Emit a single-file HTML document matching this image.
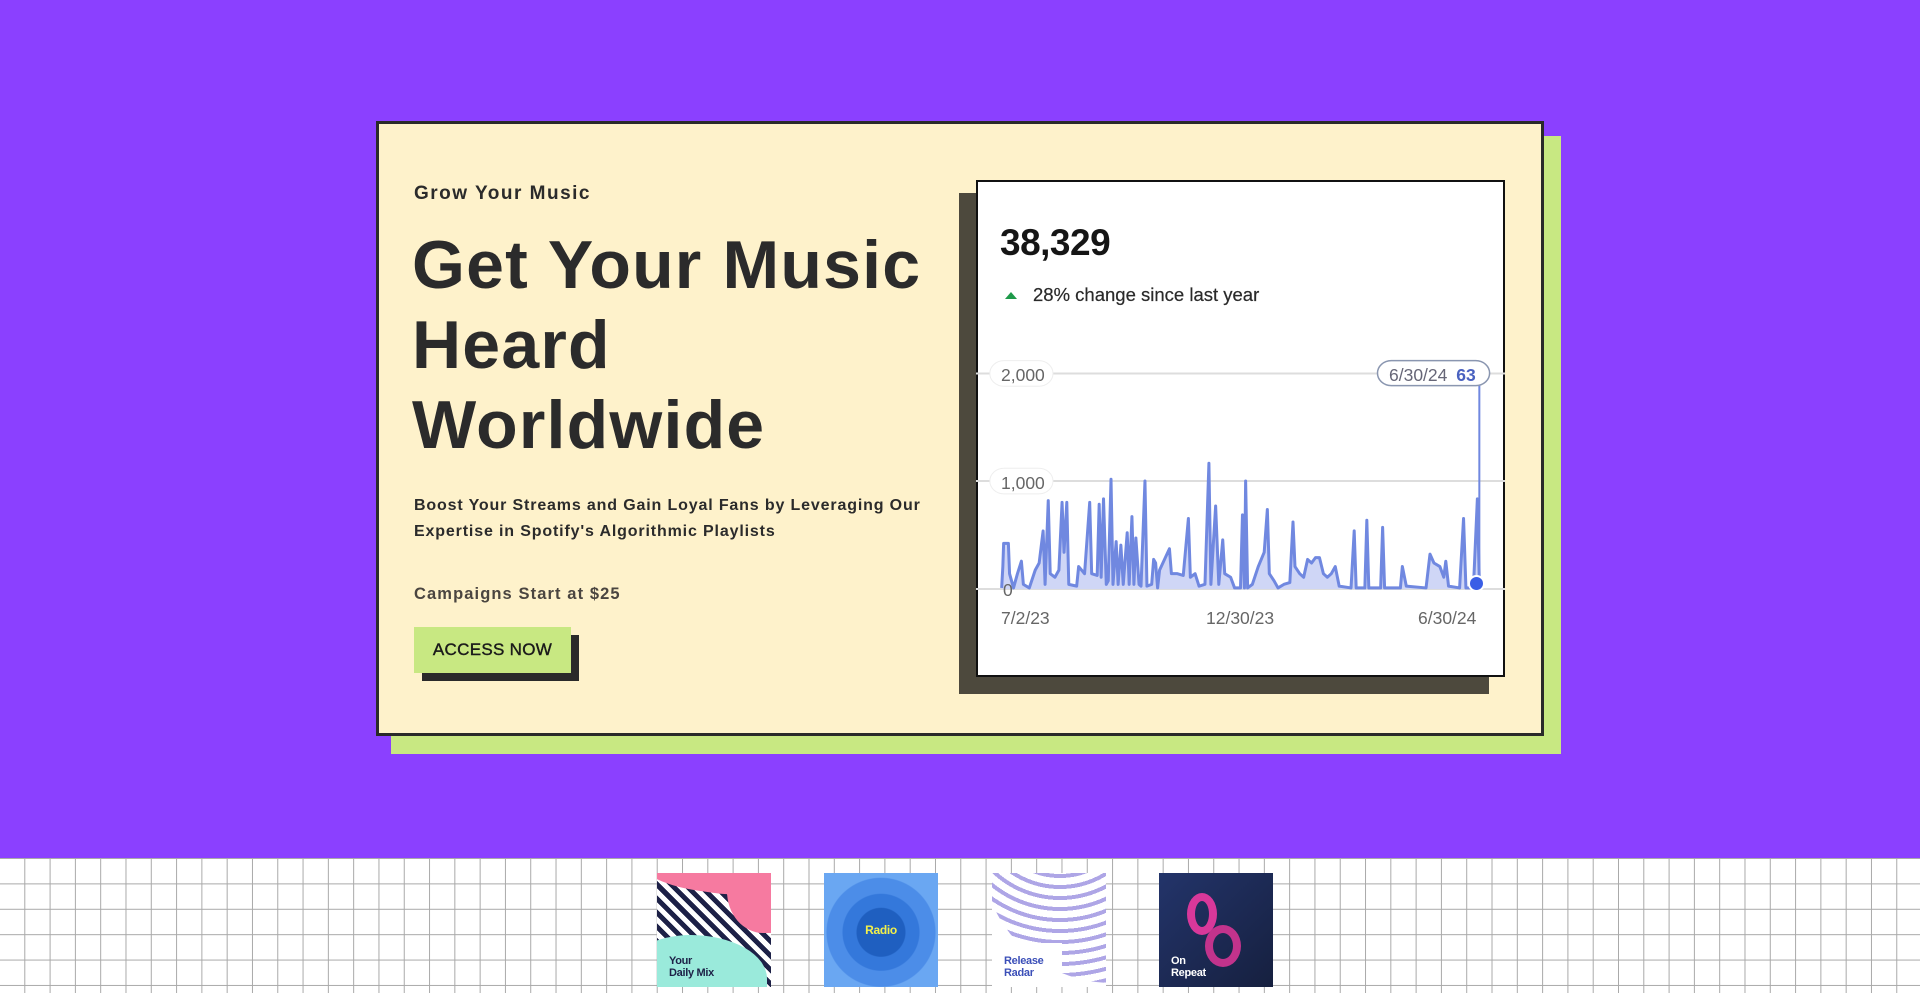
<!DOCTYPE html>
<html><head><meta charset="utf-8"><style>
*{margin:0;padding:0;box-sizing:border-box}
body{width:1920px;height:993px;overflow:hidden;font-family:"Liberation Sans",sans-serif;background:#fff;position:relative}
.purple{position:absolute;left:0;top:0;width:1920px;height:858px;background:#8b40ff}
.grid{position:absolute;left:0;top:858px;width:1920px;height:135px;background-color:#fff;
background-image:linear-gradient(to right,#a9a9a9 1px,transparent 1px),linear-gradient(to bottom,#a9a9a9 1px,transparent 1px);
background-size:25.3px 25.4px;background-position:-1px 0px}
.green{position:absolute;left:391px;top:136px;width:1170px;height:618px;background:#c8e882}
.card{position:absolute;left:376px;top:121px;width:1168px;height:615px;background:#fef2cb;border:3px solid #2a2a2a}
.abs{position:absolute;white-space:nowrap;color:#2b2b2b;font-weight:bold}
.shadow{position:absolute;left:959px;top:193px;width:530px;height:501px;background:#4d493d}
.chart{position:absolute;left:976px;top:180px;width:529px;height:497px;background:#fff;border:2px solid #111}
.thumb{position:absolute;top:873px;width:114px;height:114px;overflow:hidden}
.tt{position:absolute;font-weight:bold;font-size:11px;line-height:12px;letter-spacing:-0.3px}
</style></head><body>
<div class="purple"></div>
<div class="grid"></div>
<div class="green"></div>
<div class="card"></div>

<div class="abs" style="left:414px;top:183px;font-size:19px;letter-spacing:1.5px">Grow Your Music</div>
<div class="abs" style="left:412px;top:225px;font-size:68px;line-height:80px;letter-spacing:1.2px">Get Your Music<br>Heard<br>Worldwide</div>
<div class="abs" style="left:414px;top:493px;font-size:16px;line-height:26px;letter-spacing:0.85px">Boost Your Streams and Gain Loyal Fans by Leveraging Our<br>Expertise in Spotify's Algorithmic Playlists</div>
<div class="abs" style="left:414px;top:585px;font-size:16.5px;color:#4a4540;letter-spacing:1.1px">Campaigns Start at $25</div>
<div style="position:absolute;left:422px;top:635px;width:157px;height:46px;background:#2a2a2a"></div>
<div style="position:absolute;left:414px;top:627px;width:157px;height:46px;background:#c8e882"></div>
<div class="abs" style="left:414px;top:627px;width:157px;height:46px;line-height:46px;text-align:center;font-size:17px;font-weight:normal;color:#1a1a1a;-webkit-text-stroke:0.4px #1a1a1a;letter-spacing:0.3px">ACCESS NOW</div>

<div class="shadow"></div>
<div class="chart">
<svg style="position:absolute;left:-2px;top:-2px" width="529" height="497" viewBox="65 55 1340 1395" preserveAspectRatio="none">
<line x1="65" y1="598" x2="1405" y2="598" stroke="#ddd" stroke-width="2" vector-effect="non-scaling-stroke"/>
<line x1="65" y1="900" x2="1405" y2="900" stroke="#ddd" stroke-width="2" vector-effect="non-scaling-stroke"/>
<line x1="65" y1="1203" x2="1405" y2="1203" stroke="#ddd" stroke-width="2" vector-effect="non-scaling-stroke"/>
<rect x="100" y="562" width="160" height="72" rx="36" fill="#fff" stroke="#eee" vector-effect="non-scaling-stroke"/>
<rect x="100" y="864" width="160" height="72" rx="36" fill="#fff" stroke="#eee" vector-effect="non-scaling-stroke"/>
<path d="M130,1200 L133,1140 135,1075 147,1075 150,1160 160,1200 170,1160 180,1125 185,1190 200,1200 215,1150 225,1130 235,1040 240,1190 248,955 253,1160 265,1170 275,1150 283,960 288,1100 295,960 300,1190 320,1195 325,1140 340,1160 353,960 358,1160 372,1165 377,965 382,1170 388,950 395,1190 400,1180 407,895 412,1190 420,1070 425,1190 432,1080 438,1190 448,1045 453,1190 460,1000 465,1190 470,1060 478,1190 483,1195 493,900 498,1195 510,1190 515,1120 520,1130 525,1200 530,1150 555,1090 560,1160 575,1160 590,1165 603,1005 608,1170 620,1160 630,1195 645,1190 655,850 660,1190 672,970 680,1190 690,1065 695,1160 710,1170 720,1200 735,1200 740,995 745,1200 748,900 753,1200 765,1190 780,1140 795,1100 803,980 808,1160 820,1180 830,1200 845,1190 860,1185 868,1015 873,1140 885,1160 895,1170 905,1120 915,1130 925,1115 935,1115 945,1160 955,1170 965,1160 975,1140 985,1195 1015,1200 1023,1040 1028,1200 1050,1200 1055,1010 1060,1200 1090,1200 1095,1030 1100,1200 1140,1200 1145,1140 1155,1195 1205,1200 1215,1105 1225,1130 1240,1140 1250,1170 1255,1125 1262,1195 1290,1200 1300,1005 1306,1200 1325,1200 1335,950 1340,1185 L1340,1203 L130,1203 Z" fill="#cfd6f6" stroke="none"/>
<path d="M130,1200 L133,1140 135,1075 147,1075 150,1160 160,1200 170,1160 180,1125 185,1190 200,1200 215,1150 225,1130 235,1040 240,1190 248,955 253,1160 265,1170 275,1150 283,960 288,1100 295,960 300,1190 320,1195 325,1140 340,1160 353,960 358,1160 372,1165 377,965 382,1170 388,950 395,1190 400,1180 407,895 412,1190 420,1070 425,1190 432,1080 438,1190 448,1045 453,1190 460,1000 465,1190 470,1060 478,1190 483,1195 493,900 498,1195 510,1190 515,1120 520,1130 525,1200 530,1150 555,1090 560,1160 575,1160 590,1165 603,1005 608,1170 620,1160 630,1195 645,1190 655,850 660,1190 672,970 680,1190 690,1065 695,1160 710,1170 720,1200 735,1200 740,995 745,1200 748,900 753,1200 765,1190 780,1140 795,1100 803,980 808,1160 820,1180 830,1200 845,1190 860,1185 868,1015 873,1140 885,1160 895,1170 905,1120 915,1130 925,1115 935,1115 945,1160 955,1170 965,1160 975,1140 985,1195 1015,1200 1023,1040 1028,1200 1050,1200 1055,1010 1060,1200 1090,1200 1095,1030 1100,1200 1140,1200 1145,1140 1155,1195 1205,1200 1215,1105 1225,1130 1240,1140 1250,1170 1255,1125 1262,1195 1290,1200 1300,1005 1306,1200 1325,1200 1335,950 1340,1185" fill="none" stroke="#7088e0" stroke-width="3" stroke-linejoin="round" vector-effect="non-scaling-stroke"/>
<line x1="1340" y1="632" x2="1340" y2="1185" stroke="#7088e0" stroke-width="2" vector-effect="non-scaling-stroke"/>
<rect x="1082" y="562" width="284" height="70" rx="35" fill="#fff" stroke="#8a96b0" stroke-width="1.5" vector-effect="non-scaling-stroke"/>
</svg>
<div style="position:absolute;left:490px;top:393px;width:17px;height:17px;border-radius:50%;background:#3a5ee6;border:2px solid #fff"></div>
<div class="abs" style="left:22px;top:40px;font-size:37px;color:#151515;letter-spacing:-0.5px">38,329</div>
<div style="position:absolute;left:27px;top:110px;width:0;height:0;border-left:6px solid transparent;border-right:6px solid transparent;border-bottom:7px solid #1e9a4a"></div>
<div class="abs" style="left:55px;top:102px;font-size:18.5px;font-weight:normal;color:#2a2a2a;-webkit-text-stroke:0.2px #2a2a2a">28% change since last year</div>
<div class="abs" style="left:23px;top:183px;font-size:17.5px;font-weight:normal;color:#666">2,000</div>
<div class="abs" style="left:23px;top:291px;font-size:17.5px;font-weight:normal;color:#666">1,000</div>
<div class="abs" style="left:25px;top:398px;font-size:17.5px;font-weight:normal;color:#666">0</div>
<div class="abs" style="left:411px;top:183px;font-size:17.5px;font-weight:normal;color:#667">6/30/24 <b style="color:#4a62c0;margin-left:4px">63</b></div>
<div class="abs" style="left:23px;top:426px;font-size:17.5px;font-weight:normal;color:#666">7/2/23</div>
<div class="abs" style="left:228px;top:426px;font-size:17.5px;font-weight:normal;color:#666">12/30/23</div>
<div class="abs" style="left:440px;top:426px;font-size:17.5px;font-weight:normal;color:#666">6/30/24</div>
</div>

<!-- thumbnails -->
<div class="thumb" style="left:657px;background:repeating-linear-gradient(45deg,#1d2147 0 5px,#fff 5px 10px)">
  <div style="position:absolute;left:-20px;top:-40px;width:160px;height:60px;background:#f67aa0;border-radius:0 0 50% 40%;transform:rotate(8deg)"></div>
  <div style="position:absolute;left:70px;top:-10px;width:60px;height:70px;background:#f67aa0;border-radius:0 0 0 60%"></div>
  <div style="position:absolute;left:-30px;top:62px;width:140px;height:80px;background:#9aeadb;border-radius:50% 60% 0 0"></div>
  <div class="tt" style="left:12px;top:82px;color:#1d2147">Your<br>Daily Mix</div>
</div>
<div class="thumb" style="left:824px;background:radial-gradient(circle at 50% 52%,#1f5fc0 0 24px,#3478db 25px 38px,#4c8de8 39px 54px,#6aa7f2 55px)">
  <div class="tt" style="left:0;width:114px;text-align:center;top:51px;color:#f3f04a;font-size:12px">Radio</div>
</div>
<div class="thumb" style="left:992px;background:#fff">
  <div style="position:absolute;left:-10px;top:-150px;width:260px;height:260px;border-radius:50%;background:repeating-radial-gradient(circle at 30% 30%,transparent 0 7px,#9a8fe0 7px 11px);opacity:.8"></div>
  <div style="position:absolute;left:0;top:70px;width:70px;height:44px;background:#fff"></div>
  <div class="tt" style="left:12px;top:82px;color:#3b4fb8">Release<br>Radar</div>
</div>
<div class="thumb" style="left:1159px;background:linear-gradient(135deg,#23346a,#16203f)">
  <div style="position:absolute;left:28px;top:20px;width:30px;height:42px;border:8px solid #d8389a;border-radius:50%"></div>
  <div style="position:absolute;left:46px;top:52px;width:36px;height:42px;border:8px solid #c2338c;border-radius:50%"></div>
  <div class="tt" style="left:12px;top:82px;color:#fff">On<br>Repeat</div>
</div>
</body></html>
